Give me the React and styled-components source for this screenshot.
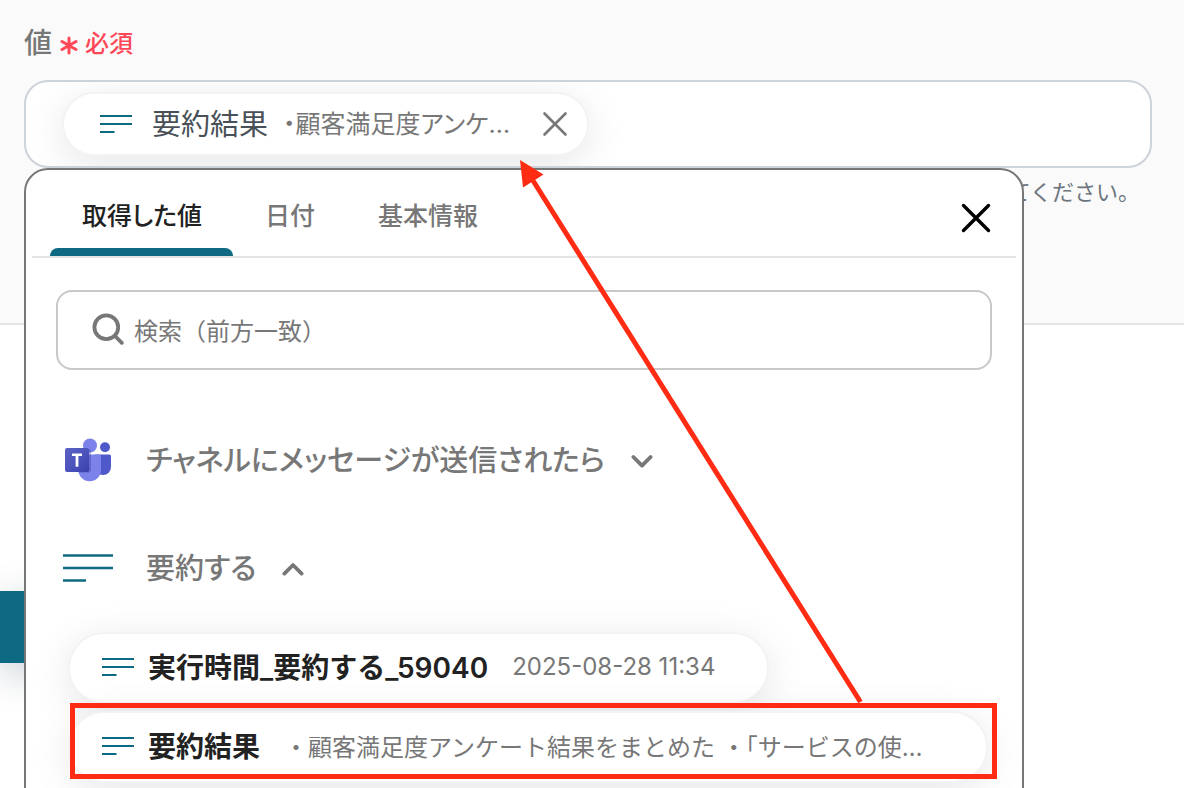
import React from "react";
import styled, { createGlobalStyle, css } from "styled-components";

const color = {
  teal: "#0d6a82",
  gray: "#777777",
  ink: "#222222",
  line: "#e5e5e5",
  red: "#ff2b12",
};

const GlobalStyle = createGlobalStyle`
  *, *::before, *::after { box-sizing: border-box; }
  body {
    margin: 0;
    background: #ffffff;
    color: ${color.ink};
    font-family: Inter, "Noto Sans CJK JP", sans-serif;
  }
  button, input { font: inherit; color: inherit; }
`;

const Page = styled.main`
  position: relative;
  height: 100vh;
  overflow: hidden;
`;

const FormSection = styled.section`
  background: #fafafa;
  border-bottom: 2px solid ${color.line};
  padding: 24px 32px 113px 24px;
`;

const LabelRow = styled.div`
  display: flex;
  align-items: center;
  gap: 8px;
  height: 40px;
  margin-bottom: 16px;
`;

const FieldLabel = styled.span`
  font-size: 28px;
  font-weight: 500;
  line-height: 40px;
  padding-bottom: 2px;
  color: ${color.gray};
`;

const Required = styled.span`
  display: flex;
  align-items: center;
  gap: 7px;
  font-size: 24px;
  font-weight: 500;
  line-height: 40px;
  color: #ff4757;
`;

const FieldWrap = styled.div`
  position: relative;
`;

const ValueField = styled.div`
  display: flex;
  align-items: center;
  height: 88px;
  padding: 0 36px;
  border: 2px solid #cdd3db;
  border-radius: 24px;
  background: #ffffff;
  overflow: hidden;
`;

const pill = css`
  display: flex;
  align-items: center;
  border: 2px solid #f3f3f3;
  border-radius: 36px;
  background: #ffffff;
  background-clip: padding-box;
  box-shadow: 0 8px 40px rgba(0, 0, 0, 0.1);
`;

const Chip = styled.div`
  ${pill}
  height: 64px;
  padding: 0 19px 0 36px;
  font-feature-settings: "palt";
`;

const ChipTitle = styled.span`
  margin-left: 20px;
  padding-bottom: 4px;
  font-size: 29px;
  color: #495057;
`;

const ChipPreview = styled.span`
  margin-left: 15px;
  padding-bottom: 4px;
  font-size: 25px;
  color: ${color.gray};
`;

const IconButton = styled.button`
  display: flex;
  padding: 0;
  border: 0;
  background: none;
  cursor: pointer;
`;

const ChipRemove = styled(IconButton)`
  margin-left: 32px;
`;

const Helper = styled.p`
  margin: 6px 12px 0 0;
  font-size: 22px;
  line-height: 36px;
  text-align: right;
  color: #6c757d;
`;

const Panel = styled.div`
  position: absolute;
  top: 100%;
  left: 0;
  width: calc(100% - 128px);
  padding: 0 6px 80px;
  border: 2px solid ${color.gray};
  border-radius: 24px;
  background: #ffffff;
`;

const PanelHeader = styled.div`
  display: flex;
  align-items: flex-end;
  justify-content: space-between;
  height: 88px;
  padding: 0 25px 0 18px;
  border-bottom: 2px solid ${color.line};
`;

const TabList = styled.div`
  display: flex;
`;

const Tab = styled.button`
  position: relative;
  height: 86px;
  padding: 2px 31px 0 32px;
  border: 0;
  background: none;
  font-size: 25px;
  font-weight: 500;
  font-feature-settings: "palt";
  color: ${(p) => (p.$active ? color.ink : color.gray)};
  cursor: pointer;
  &::after {
    content: "";
    display: ${(p) => (p.$active ? "block" : "none")};
    position: absolute;
    left: 0;
    right: 0;
    bottom: 0;
    height: 8px;
    border-radius: 8px 8px 0 0;
    background: ${color.teal};
  }
`;

const PanelClose = styled(IconButton)`
  margin-bottom: 23px;
`;

const PanelBody = styled.div`
  padding: 32px 24px 0;
`;

const SearchBox = styled.label`
  display: flex;
  align-items: center;
  gap: 10px;
  height: 80px;
  padding: 0 32px 2px 34px;
  border: 2px solid #c8c8c8;
  border-radius: 16px;
`;

const SearchInput = styled.input`
  flex: 1;
  min-width: 0;
  padding: 4px 0 0;
  border: 0;
  outline: 0;
  background: none;
  font-size: 24px;
  &::placeholder {
    color: ${color.gray};
    opacity: 1;
  }
`;

const GroupList = styled.div`
  display: flex;
  flex-direction: column;
  gap: 48px;
  padding-top: 60px;
`;

const GroupToggle = styled.button`
  display: flex;
  align-items: center;
  height: 60px;
  padding: 0 7px;
  border: 0;
  background: none;
  font-size: 29px;
  font-weight: 500;
  font-feature-settings: "palt";
  color: ${color.gray};
  cursor: pointer;
`;

const GroupName = styled.span`
  margin: 0 26px 0 33px;
  padding-bottom: 4px;
`;

const OptionList = styled.ul`
  display: flex;
  flex-direction: column;
  align-items: flex-start;
  gap: 7px;
  margin: 34px 0 0;
  padding: 0 4px 0 12px;
  list-style: none;
`;

const OptionItem = styled.li`
  position: relative;
  width: ${(p) => (p.$wide ? "100%" : "auto")};
`;

const Option = styled.button`
  ${pill}
  width: 100%;
  height: 72px;
  padding: 0 52px 2px 32px;
  white-space: nowrap;
  cursor: pointer;
`;

const OptionTitle = styled.span`
  margin-left: 14px;
  padding-bottom: 2px;
  font-size: 28px;
  font-weight: 600;
`;

const OptionPreview = styled.span`
  margin-left: 24px;
  font-size: 24px;
  padding-bottom: 2px;
  color: ${color.gray};
`;

const Highlight = styled.div`
  position: absolute;
  inset: -8px -9px 4px 2px;
  border: 5px solid ${color.red};
  pointer-events: none;
`;

const Arrow = styled.svg`
  position: absolute;
  top: 80px;
  left: 496px;
  pointer-events: none;
`;

const Footer = styled.footer`
  padding-top: 266px;
`;

const SubmitButton = styled.button`
  display: block;
  width: 160px;
  height: 72px;
  border: 0;
  background: ${color.teal};
  box-shadow: 0 10px 40px rgba(10, 40, 60, 0.22);
`;

const LinesIcon = ({ large }) =>
  large ? (
    <svg width="50" height="30" viewBox="0 0 50 30" fill="none" stroke={color.teal} strokeWidth="2.6" aria-hidden="true">
      <path d="M0 2.5h50M0 15h50M0 27.5h23" />
    </svg>
  ) : (
    <svg width="32" height="20" viewBox="0 0 32 20" fill="none" stroke={color.teal} strokeWidth="1.8" aria-hidden="true">
      <path d="M0 2h32M0 10h32M0 18h14.5" />
    </svg>
  );

const CrossIcon = ({ size, width, stroke }) => (
  <svg width={size} height={size} viewBox={`0 0 ${size} ${size}`} fill="none" stroke={stroke} strokeWidth={width} strokeLinecap="round" aria-hidden="true">
    <path d={`M2.500 2.500L${size - 2.5} ${size - 2.5}M${size - 2.5} 2.500L2.500 ${size - 2.5}`} />
  </svg>
);

const Chevron = ({ up }) => (
  <svg width="22" height="16" viewBox="0 0 22 16" fill="none" stroke={color.gray} strokeWidth="3.8" strokeLinecap="round" strokeLinejoin="round" aria-hidden="true">
    <path d={up ? "M2.4 13.6L11 5L19.6 13.6" : "M2.4 5L11 13.6L19.6 5"} />
  </svg>
);

const SearchIcon = () => (
  <svg width="32" height="32" viewBox="0 0 32 32" fill="none" stroke={color.gray} strokeWidth="3.8" strokeLinecap="round" aria-hidden="true">
    <circle cx="14.3" cy="14.3" r="11.9" />
    <path d="M23 23L29.8 29.8" />
  </svg>
);

const AsteriskIcon = () => (
  <svg width="18" height="22" viewBox="0 0 18 22" fill="none" stroke="#ff4757" strokeWidth="3" strokeLinecap="round" aria-hidden="true">
    <path d="M9 5v15M2 8.500l14 8M16 8.500L2 16.500" />
  </svg>
);

const TeamsIcon = () => (
  <svg width="50" height="46" viewBox="0 0 50 46" aria-hidden="true">
    <defs>
      <linearGradient id="teamsTile" x1="0" y1="0" x2="1" y2="1">
        <stop offset="0" stopColor="#5a62c3" />
        <stop offset="0.5" stopColor="#4d55bd" />
        <stop offset="1" stopColor="#3940ab" />
      </linearGradient>
    </defs>
    <circle cx="42" cy="10.2" r="5" fill="#5059c9" />
    <path d="M32 17.600h14.300q1.700 0 1.700 1.700v10.700a8 8 0 0 1-16 0z" fill="#5059c9" />
    <circle cx="27" cy="8.500" r="7" fill="#7b83eb" />
    <path d="M16.500 17.600h20q1.500 0 1.500 1.600v13.800a11.300 11.300 0 0 1-22.600 0v-14z" fill="#7b83eb" />
    <path d="M15 12h11.500q1.500 0 1.500 1.500v20q0 2-2 2h-11z" fill="#30368c" opacity="0.35" />
    <rect x="2" y="11" width="24" height="24" rx="2" fill="url(#teamsTile)" />
    <path d="M9 16.400h10v2.700h-3.600v10.700h-2.800v-10.700h-3.600z" fill="#ffffff" />
  </svg>
);

export default function App() {
  return (
    <>
      <GlobalStyle />
      <Page>
        <FormSection>
          <LabelRow>
            <FieldLabel id="value-label">値</FieldLabel>
            <Required>
              <AsteriskIcon />
              必須
            </Required>
          </LabelRow>
          <FieldWrap>
            <ValueField role="group" aria-labelledby="value-label">
              <Chip>
                <LinesIcon />
                <ChipTitle>要約結果</ChipTitle>
                <ChipPreview>・顧客満足度アンケ…</ChipPreview>
                <ChipRemove type="button" aria-label="削除">
                  <CrossIcon size={26} width={2.6} stroke={color.gray} />
                </ChipRemove>
              </Chip>
            </ValueField>
            <Panel>
              <PanelHeader>
                <TabList role="tablist">
                  <Tab type="button" role="tab" aria-selected="true" $active>
                    取得した値
                  </Tab>
                  <Tab type="button" role="tab" aria-selected="false">
                    日付
                  </Tab>
                  <Tab type="button" role="tab" aria-selected="false">
                    基本情報
                  </Tab>
                </TabList>
                <PanelClose type="button" aria-label="閉じる">
                  <CrossIcon size={30} width={3.4} stroke="#000000" />
                </PanelClose>
              </PanelHeader>
              <PanelBody>
                <SearchBox>
                  <SearchIcon />
                  <SearchInput type="text" aria-label="検索" placeholder="検索（前方一致）" />
                </SearchBox>
                <GroupList>
                  <GroupToggle type="button" aria-expanded="false">
                    <TeamsIcon />
                    <GroupName>チャネルにメッセージが送信されたら</GroupName>
                    <Chevron />
                  </GroupToggle>
                  <GroupToggle type="button" aria-expanded="true">
                    <LinesIcon large />
                    <GroupName>要約する</GroupName>
                    <Chevron up />
                  </GroupToggle>
                </GroupList>
                <OptionList>
                  <OptionItem>
                    <Option type="button">
                      <LinesIcon />
                      <OptionTitle>実行時間_要約する_59040</OptionTitle>
                      <OptionPreview>2025-08-28 11:34</OptionPreview>
                    </Option>
                  </OptionItem>
                  <OptionItem $wide>
                    <Option type="button">
                      <LinesIcon />
                      <OptionTitle>要約結果</OptionTitle>
                      <OptionPreview>・顧客満足度アンケート結果をまとめた ・「サービスの使…</OptionPreview>
                    </Option>
                    <Highlight />
                  </OptionItem>
                </OptionList>
              </PanelBody>
            </Panel>
            <Arrow width="344" height="546" viewBox="520 160 344 546" aria-hidden="true">
              <path d="M532 179L860.500 702" stroke={color.red} strokeWidth="5" />
              <path d="M520 160L543.500 174.500L523 187.500Z" fill={color.red} />
            </Arrow>
          </FieldWrap>
          <Helper>値を入力してください。</Helper>
        </FormSection>
        <Footer>
          <SubmitButton type="button" aria-label="保存" />
        </Footer>
      </Page>
    </>
  );
}
